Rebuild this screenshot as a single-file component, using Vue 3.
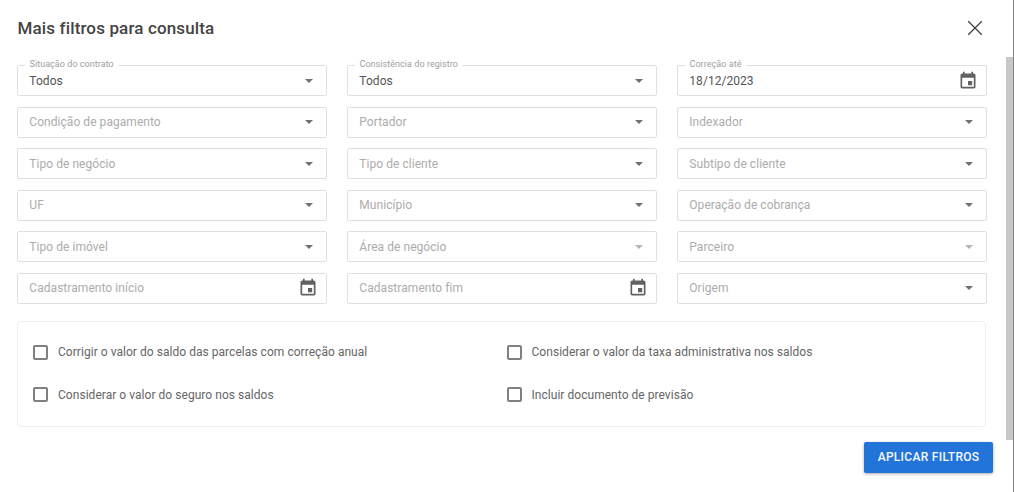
<script setup>
const rows = [
  [{ label: 'Situação do contrato', value: 'Todos' }, { label: 'Consistência do registro', value: 'Todos' }, { label: 'Correção até', value: '18/12/2023', date: true }],
  [{ ph: 'Condição de pagamento' }, { ph: 'Portador' }, { ph: 'Indexador' }],
  [{ ph: 'Tipo de negócio' }, { ph: 'Tipo de cliente' }, { ph: 'Subtipo de cliente' }],
  [{ ph: 'UF' }, { ph: 'Município' }, { ph: 'Operação de cobrança' }],
  [{ ph: 'Tipo de imóvel' }, { ph: 'Área de negócio', off: true }, { ph: 'Parceiro', off: true }],
  [{ ph: 'Cadastramento início', date: true }, { ph: 'Cadastramento fim', date: true }, { ph: 'Origem' }]
]
const fields = rows.flat()
const checks = [
  'Corrigir o valor do saldo das parcelas com correção anual',
  'Considerar o valor da taxa administrativa nos saldos',
  'Considerar o valor do seguro nos saldos',
  'Incluir documento de previsão'
]
</script>

<template>
  <div class="dialog">
    <div class="content">
      <header class="head">
        <h2>Mais filtros para consulta</h2>
        <svg class="close" width="16" height="16" viewBox="0 0 16 16"><path d="M1.2 1.2 14.8 14.8M14.8 1.2 1.2 14.8" /></svg>
      </header>
      <div class="grid">
        <div v-for="(f, i) in fields" :key="i" class="field">
          <span v-if="f.label" class="legend">{{ f.label }}</span>
          <span :class="f.value ? 'val' : 'ph'">{{ f.value || f.ph }}</span>
          <svg v-if="f.date" class="cal" width="20" height="20" viewBox="0 0 24 24"><path d="M17 12h-5v5h5v-5zM16 1v2H8V1H6v2H5c-1.11 0-1.99.9-1.99 2L3 19c0 1.1.89 2 2 2h14c1.1 0 2-.9 2-2V5c0-1.1-.9-2-2-2h-1V1h-2zm3 18H5V8h14v11z" /></svg>
          <span v-else class="arrow" :class="{ off: f.off }"></span>
        </div>
      </div>
      <div class="panel">
        <label v-for="c in checks" :key="c" class="check"><span class="box"></span>{{ c }}</label>
      </div>
      <div class="foot"><button class="apply">APLICAR FILTROS</button></div>
    </div>
    <div class="scroll"><div class="thumb"></div></div>
  </div>
</template>

<style>
html, body { margin: 0; background: #fff; overflow: hidden; }
</style>

<style scoped>
.dialog { width: 1014px; height: 492px; display: flex; background: #fff; font-family: Roboto, sans-serif; overflow: hidden; }
.content { flex: 1; min-width: 0; padding: 0 20px 0 17px; }
.head { height: 56px; display: flex; align-items: center; justify-content: space-between; }
.head h2 { margin: 0 0 0 0.5px; font-size: 17px; font-weight: 500; color: #444444; letter-spacing: 0.14px; }
.close { fill: none; stroke: #424242; stroke-width: 1.3; margin-right: 3px; }
.grid { display: grid; grid-template-columns: repeat(3, 310px); column-gap: 20px; row-gap: 10.6px; margin-top: 9px; }
.field { position: relative; height: 31px; box-sizing: border-box; border: 1px solid #e0e0e0; border-radius: 2px; display: flex; align-items: center; justify-content: space-between; padding: 0 12px 0 11.3px; font-size: 12px; letter-spacing: 0.05px; }
.legend { position: absolute; top: -7px; left: 7px; padding: 0 4.5px; background: #fff; font-size: 9px; line-height: 11px; color: #a0a0a0; }
.val { color: #555555; }
.ph { color: #acacac; }
.arrow { width: 0; height: 0; border-left: 4.5px solid transparent; border-right: 4.5px solid transparent; border-top: 4.5px solid #707070; margin-right: 1px; }
.arrow.off { border-top-color: #b5b5b5; }
.cal { fill: #616161; margin-right: -4px; }
.panel { margin-top: 17px; width: 969px; height: 106px; box-sizing: border-box; border: 1px solid #eeeeee; border-radius: 4px; padding: 9px 15px; display: grid; grid-template-columns: 473.5px 1fr; grid-auto-rows: 42.5px; align-items: center; }
.check { display: flex; align-items: center; font-size: 12px; letter-spacing: 0.04px; color: #666666; }
.box { width: 15px; height: 15px; box-sizing: border-box; border: 2px solid #808080; border-radius: 2px; margin-right: 10px; }
.foot { display: flex; justify-content: flex-end; margin-top: 15px; margin-right: -7px; }
.apply { width: 129px; height: 31px; border: 0; border-radius: 2px; background: #2374d9; color: #f5f8fd; font: 500 12px Roboto, sans-serif; letter-spacing: 0.3px; box-shadow: 0 1px 3px rgba(0, 0, 0, 0.35); padding: 0; }
.scroll { width: 8px; box-sizing: border-box; border-right: 1px solid #808080; background: #fff; position: relative; flex: none; }
.thumb { position: absolute; top: 57px; bottom: 52px; left: 0; right: 0; background: #c8c8c8; }
</style>
